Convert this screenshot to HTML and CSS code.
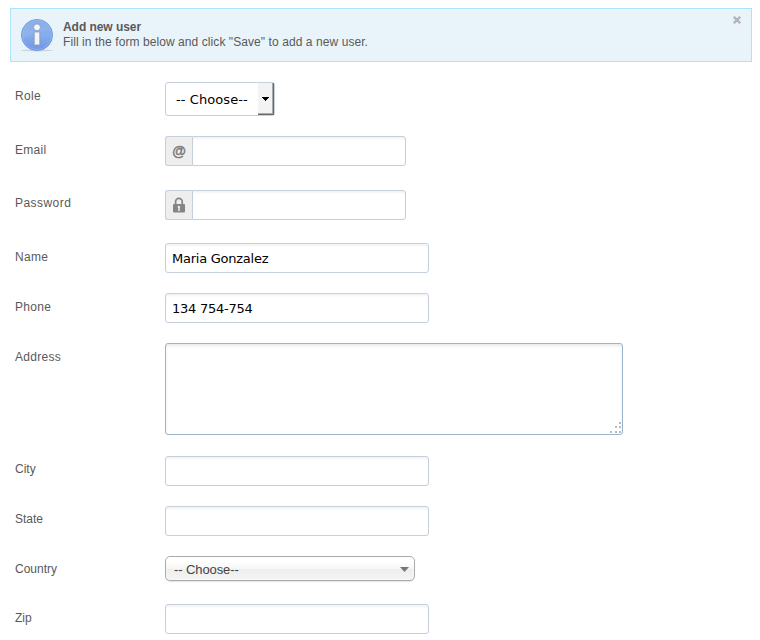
FILE: index.html
```
<!DOCTYPE html>
<html lang="en">
<head>
<meta charset="utf-8">
<title>Add new user</title>
<link rel="stylesheet" href="styles.css">
</head>
<body>
<section class="notice">
  <svg class="notice-icon" width="34" height="34" viewBox="0 0 34 34">
    <defs>
      <linearGradient id="disc" x1="0" y1="0" x2="0" y2="1">
        <stop offset="0" stop-color="#7ea8e6"/><stop offset=".5" stop-color="#86adec"/><stop offset="1" stop-color="#7095e6"/>
      </linearGradient>
    </defs>
    <ellipse cx="17" cy="32.4" rx="16" ry="1" fill="#c9d4dd"/>
    <circle cx="17" cy="17" r="15.6" fill="url(#disc)" stroke="#6a94d8" stroke-width=".8"/>
    <circle cx="17" cy="17" r="14.6" fill="none" stroke="#94b8ef" stroke-width=".7"/>
    <path d="M3 20A14 14 0 0 1 31 13Q15 13 3 20Z" fill="#fff" opacity=".08"/>
    <circle cx="17" cy="9.3" r="3.4" fill="#f7f7f5" stroke="#7891bd" stroke-width=".7"/>
    <rect x="14.2" y="14" width="5.6" height="13" rx=".6" fill="#f4f4f2" stroke="#7891bd" stroke-width=".7"/>
  </svg>
  <div class="notice-copy">
    <h1>Add new user</h1>
    <p>Fill in the form below and click "Save" to add a new user.</p>
  </div>
  <svg class="close" width="8" height="8" viewBox="0 0 8 8"><path d="M.8 .8L7.2 7.2M7.2 .8L.8 7.2" stroke="#b5b5b7" stroke-width="2.4"/></svg>
</section>
<form>
  <div class="row"><label class="wide" for="role">Role</label>
    <div class="role" id="role"><span>-- Choose--</span><i class="role-button"><svg width="7" height="4" viewBox="0 0 7 4" shape-rendering="crispEdges"><path d="M0 0h7v1H6v1H5v1H4v1H3V3H2V2H1V1H0Z" fill="#000"/></svg></i></div></div>
  <div class="row gap-24"><label class="wide" for="email">Email</label>
    <div class="group"><span class="addon at">@</span><input id="email" type="text"></div></div>
  <div class="row gap-23"><label class="password-label" for="password">Password</label>
    <div class="group"><span class="addon"><svg width="14" height="16" viewBox="0 0 14 16"><path d="M3.6 8V4.6a3.3 3.3 0 0 1 6.6 0V8" fill="none" stroke="#858585" stroke-width="1.7"/><rect x="1" y="7" width="12" height="8.6" rx="1" fill="#858585"/><path d="M6.9 8.8a1.3 1.3 0 0 1 .8 2.3V14H6.2V11.1a1.3 1.3 0 0 1 .7-2.3Z" fill="#eee"/></svg></span><input id="password" type="password"></div></div>
  <div class="row"><label class="wide" for="name">Name</label><input class="field" id="name" type="text" value="Maria Gonzalez"></div>
  <div class="row"><label class="wide" for="phone">Phone</label><input class="field" id="phone" type="text" value="134 754-754"></div>
  <div class="row gap-21"><label class="wide" for="address">Address</label>
    <div class="area"><textarea id="address"></textarea><svg class="grip" width="11" height="11" viewBox="0 0 11 11" fill="#bbb"><path d="M9 0h2v2H9zM5 4h2v2H5zM9 4h2v2H9zM0 9h2v2H0zM5 9h2v2H5zM9 9h2v2H9z"/></svg></div></div>
  <div class="row"><label for="city">City</label><input class="field" id="city" type="text"></div>
  <div class="row"><label for="state">State</label><input class="field" id="state" type="text"></div>
  <div class="row gap-23"><label for="country">Country</label>
    <div class="country" id="country"><span>-- Choose--</span><svg width="9" height="5" viewBox="0 0 9 5"><path d="M0 0H9L4.5 5Z" fill="#777"/></svg></div></div>
  <div class="row"><label class="zip-label" for="zip">Zip</label><input class="field" id="zip" type="text"></div>
</form>
</body>
</html>
```
FILE: styles.css
```
* { box-sizing: border-box; }
body {
  margin: 0;
  padding: 8px 8px 0 10px;
  background: #fff;
  color: #595959;
  font: 12px/15px "Liberation Sans", Arial, sans-serif;
  overflow: hidden;
}
.notice {
  display: flex;
  align-items: flex-start;
  height: 54px;
  padding: 9px 10px 9px 9px;
  background: #e9f4fa;
  border: 1px solid #ace3f9;
}
.notice-icon { flex: none; }
.notice-copy { flex: 1; padding: 2px 0 0 9px; }
.notice h1 { margin: 0; font-size: 12px; line-height: 15px; letter-spacing: -.05px; }
.notice p { margin: 0; letter-spacing: .075px; }
.close { margin-top: -2px; }
form { padding: 20px 0 0 5px; }
.row { display: flex; align-items: flex-start; margin-bottom: 20px; }
.gap-21 { margin-bottom: 21px; }
.gap-23 { margin-bottom: 23px; }
.gap-24 { margin-bottom: 24px; }
label { width: 150px; padding-top: 5px; line-height: 16px; }
.wide { padding-top: 6px; letter-spacing: .3px; }
.zip-label { padding-top: 6px; }
.password-label { letter-spacing: .45px; }
input, textarea {
  border: 1px solid #c6cfdc;
  border-radius: 3px;
  background: #fff;
  box-shadow: inset 0 2px 2px #f4f4f4;
  color: #000;
  font: 13px/18px "DejaVu Sans", Verdana, sans-serif;
  outline: 0;
}
.field { width: 264px; height: 30px; padding: 1px 6px 0; letter-spacing: -.25px; }
.group { display: flex; width: 241px; height: 30px; }
.group input { width: 214px; height: 30px; border-radius: 0 3px 3px 0; }
.addon {
  display: flex;
  align-items: center;
  justify-content: center;
  width: 27px;
  border: 1px solid #c6cfdc;
  border-right: 0;
  border-radius: 3px 0 0 3px;
  background: #eee;
  color: #777;
  font-weight: bold;
}
.at { font-size: 14px; -webkit-text-stroke: .3px #777; }
.role {
  display: flex;
  width: 110px;
  height: 34px;
  border: 1px solid #c6cfdc;
  border-radius: 3px;
  color: #000;
  font: 13px/33px "DejaVu Sans", Verdana, sans-serif;
  letter-spacing: .08px;
}
.role span { width: 92px; padding-left: 10px; white-space: nowrap; }
.role-button {
  display: flex;
  align-items: center;
  justify-content: center;
  width: 16px;
  height: 32px;
  padding: 0 1px 0 0;
  background: #f3f3f3;
  border-right: 1px solid #696a6c;
  border-bottom: 1px solid #696a6c;
  box-shadow: inset -1px -1px #a9a9a9;
}
.area { position: relative; width: 458px; height: 92px; }
textarea { display: block; width: 100%; height: 100%; resize: none; border-color: #9ab6cf; box-shadow: inset 0 2px 3px #eaeaea; }
.grip { position: absolute; right: 2px; bottom: 2px; }
.country {
  display: flex;
  align-items: center;
  justify-content: space-between;
  width: 250px;
  height: 25px;
  padding: 1px 5px 0 8px;
  border: 1px solid #aaa;
  border-radius: 5px;
  background: linear-gradient(#fff 20%, #f6f6f6 50%, #eee 52%, #f4f4f4);
  box-shadow: inset 0 0 3px #fff, 0 1px 1px rgba(0,0,0,.1);
  color: #444;
  font-size: 13px;
  letter-spacing: -.1px;
}
```
